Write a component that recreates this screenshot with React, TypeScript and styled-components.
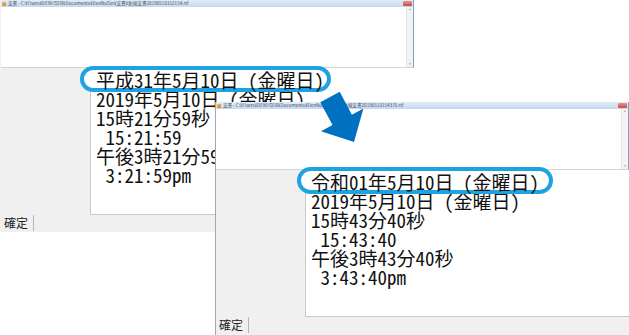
import React from 'react'
import styled, { createGlobalStyle } from 'styled-components'

const GlobalStyle = createGlobalStyle`
    html, body {
        margin: 0;
        padding: 0;
        background: #ffffff;
        overflow: hidden;
    }
`

const Canvas = styled.div`
    position: relative;
    width: 629px;
    height: 335px;
    overflow: hidden;
    background: #ffffff;
`

const Window = styled.div<{ $left: number; $top: number; $width: number; $height: number; $z: number }>`
    position: absolute;
    left: ${p => p.$left}px;
    top: ${p => p.$top}px;
    width: ${p => p.$width}px;
    height: ${p => p.$height}px;
    z-index: ${p => p.$z};
    display: flex;
    flex-direction: column;
    background: #f0f0f0;
    box-sizing: border-box;
    border-left: 1px solid ${p => (p.$left > 0 ? '#a7a7a7' : 'transparent')};
`

const TitleBar = styled.div`
    height: 7px;
    flex: none;
    display: flex;
    align-items: center;
    gap: 2px;
    padding: 0 1px;
    background: linear-gradient(#e2ecf8, #c6d8ef);
    border-right: 1px solid #7ea3d2;
    font-family: 'Noto Sans CJK JP', sans-serif;
    font-size: 4.6px;
    line-height: 7px;
    color: #3c4a5c;
    white-space: nowrap;
    overflow: hidden;
`

const AppIcon = styled.span`
    width: 4px;
    height: 4px;
    flex: none;
    background: linear-gradient(135deg, #f6c343, #d9772a);
    border-radius: 1px;
`

const TitleText = styled.span`
    flex: 1;
    overflow: hidden;
`

const CloseButton = styled.span`
    width: 9px;
    height: 5px;
    flex: none;
    border-radius: 1px;
    background: linear-gradient(#e49a8c, #c8473a);
`

const Editor = styled.div`
    height: 60px;
    flex: none;
    display: flex;
    justify-content: flex-end;
    background: #ffffff;
    border-right: 1px solid #7ea3d2;
    border-bottom: 1px solid #d4d4d4;
`

const ScrollTrack = styled.div`
    width: 6px;
    display: flex;
    flex-direction: column;
    justify-content: space-between;
    align-items: center;
    padding: 1px 0;
    background: #f3f3f3;
    border-left: 1px solid #e6e6e6;
    font-size: 3px;
    line-height: 3px;
    color: #9a9a9a;
`

const Workspace = styled.div`
    flex: 1;
    display: flex;
    flex-direction: column;
`

const Candidate = styled.div`
    height: 147px;
    margin-left: 89px;
    padding: 1.5px 0 0 5px;
    box-sizing: border-box;
    background: #ffffff;
    border-left: 1px solid #c9c9c9;
    border-bottom: 1px solid #c9c9c9;
    font-family: 'Noto Sans Mono CJK JP', 'Noto Sans CJK JP', monospace;
    font-size: 19px;
    line-height: 19px;
    color: #111111;
    white-space: pre;
`

const Line = styled.div`
    height: 19px;
`

const MarkedLine = styled.div<{ $padL: number; $padR: number; $padT: number; $padB: number }>`
    position: relative;
    z-index: 1;
    width: fit-content;
    height: 19px;

    &::before {
        content: '';
        position: absolute;
        left: -${p => p.$padL}px;
        right: -${p => p.$padR}px;
        top: -${p => p.$padT}px;
        bottom: -${p => p.$padB}px;
        box-sizing: border-box;
        border: 4px solid #1ea2e2;
        border-radius: 16px;
        background: #ffffff;
        z-index: -1;
    }
`

const StatusBar = styled.div`
    height: 16px;
    flex: none;
    display: flex;
    align-items: stretch;
    padding-left: 3px;
    font-family: 'Noto Sans CJK JP', sans-serif;
    font-size: 12px;
    line-height: 16px;
    color: #222222;
`

const StatusCell = styled.span`
    padding-right: 5px;
    border-right: 1px solid #b5b5b5;
`

const Arrow = styled.svg`
    position: absolute;
    left: 310px;
    top: 85px;
    z-index: 10;
`

type ShotProps = {
    left: number
    top: number
    height: number
    z: number
    file: string
    lines: string[]
    mark: { l: number; r: number; t: number; b: number }
}

const Shot: React.FC<ShotProps> = ({ left, top, height, z, file, lines, mark }) => (
    <Window $left={left} $top={top} $width={414} $height={height} $z={z}>
        <TitleBar>
            <AppIcon />
            <TitleText>文書 - C:¥Users¥DENUSER¥Documents¥DenNoSin¥文書¥新規文書{file}.rtf</TitleText>
            <CloseButton />
        </TitleBar>
        <Editor>
            <ScrollTrack>
                <span>▲</span>
                <span>▼</span>
            </ScrollTrack>
        </Editor>
        <Workspace>
            <Candidate>
                <MarkedLine $padL={mark.l} $padR={mark.r} $padT={mark.t} $padB={mark.b}>{lines[0]}</MarkedLine>
                {lines.slice(1).map((text, i) => (
                    <Line key={i}>{text}</Line>
                ))}
            </Candidate>
            <StatusBar>
                <StatusCell>確定</StatusCell>
            </StatusBar>
        </Workspace>
    </Window>
)

export default function App() {
    return (
        <>
            <GlobalStyle />
            <Canvas>
                <Shot
                    left={0}
                    top={0}
                    height={232}
                    z={1}
                    file="20190510152154"
                    mark={{ l: 16, r: 7, t: 4, b: 3 }}
                    lines={[
                        '平成31年5月10日 (金曜日)',
                        '2019年5月10日 (金曜日)',
                        '15時21分59秒',
                        ' 15:21:59',
                        '午後3時21分59秒',
                        ' 3:21:59pm',
                    ]}
                />
                <Shot
                    left={215}
                    top={102}
                    height={233}
                    z={2}
                    file="20190510154376"
                    mark={{ l: 14, r: 14, t: 5, b: 3 }}
                    lines={[
                        '令和01年5月10日 (金曜日)',
                        '2019年5月10日 (金曜日)',
                        '15時43分40秒',
                        ' 15:43:40',
                        '午後3時43分40秒',
                        ' 3:43:40pm',
                    ]}
                />
                <Arrow width="60" height="62" viewBox="0 0 60 62">
                    <polygon
                        points="29.7,6.8 41.9,29.7 53.4,23.6 44,57 11,46.2 22.5,40.1 10.3,17.2"
                        fill="#0071c1"
                    />
                </Arrow>
            </Canvas>
        </>
    )
}
